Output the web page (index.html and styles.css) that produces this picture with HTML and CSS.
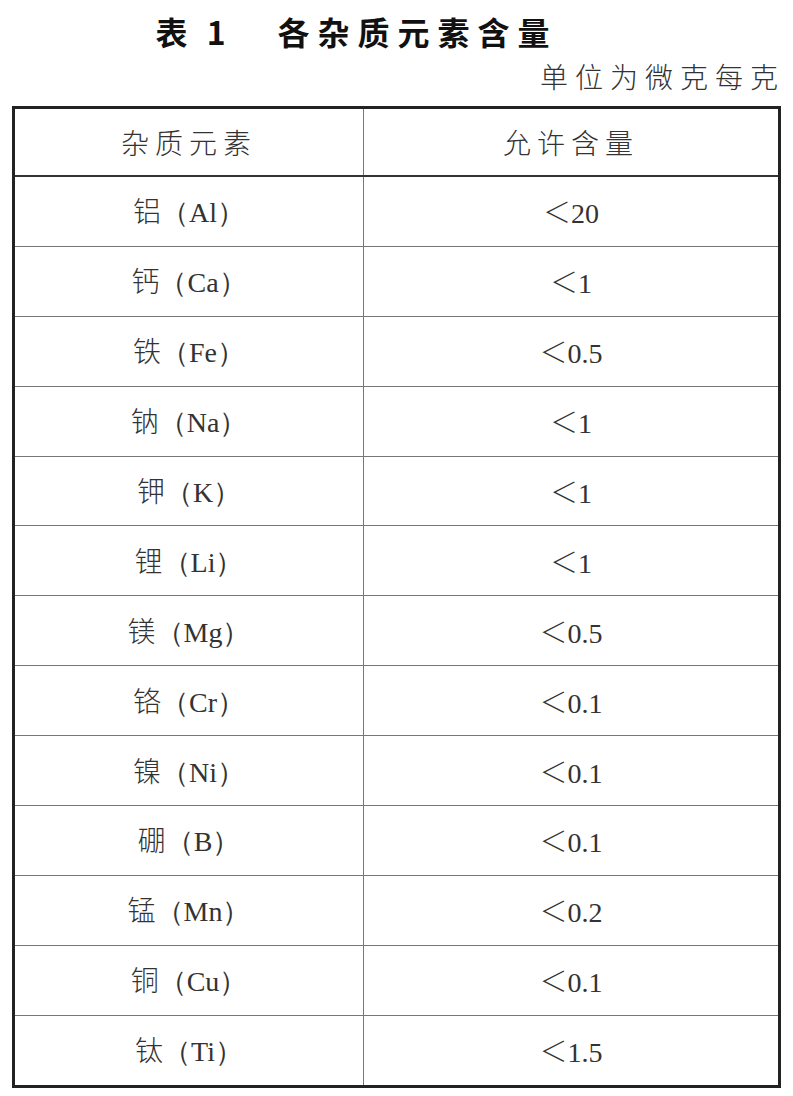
FILE: index.html
```html
<!DOCTYPE html>
<html lang="zh">
<head>
<meta charset="utf-8">
<link rel="stylesheet" href="styles.css">
</head>
<body>
<div class="page">
  <h1 class="title"><span class="tno">表 1</span><span class="tname">各杂质元素含量</span></h1>
  <div class="unit">单位为微克每克</div>
  <table class="tbl">
    <thead>
      <tr><th>杂质元素</th><th>允许含量</th></tr>
    </thead>
    <tbody>
      <tr><td>铝<span class="lat">（Al）</span></td><td><span class="lt">＜</span><span class="num">20</span></td></tr>
      <tr><td>钙<span class="lat">（Ca）</span></td><td><span class="lt">＜</span><span class="num">1</span></td></tr>
      <tr><td>铁<span class="lat">（Fe）</span></td><td><span class="lt">＜</span><span class="num">0.5</span></td></tr>
      <tr><td>钠<span class="lat">（Na）</span></td><td><span class="lt">＜</span><span class="num">1</span></td></tr>
      <tr><td>钾<span class="lat">（K）</span></td><td><span class="lt">＜</span><span class="num">1</span></td></tr>
      <tr><td>锂<span class="lat">（Li）</span></td><td><span class="lt">＜</span><span class="num">1</span></td></tr>
      <tr><td>镁<span class="lat">（Mg）</span></td><td><span class="lt">＜</span><span class="num">0.5</span></td></tr>
      <tr><td>铬<span class="lat">（Cr）</span></td><td><span class="lt">＜</span><span class="num">0.1</span></td></tr>
      <tr><td>镍<span class="lat">（Ni）</span></td><td><span class="lt">＜</span><span class="num">0.1</span></td></tr>
      <tr><td>硼<span class="lat">（B）</span></td><td><span class="lt">＜</span><span class="num">0.1</span></td></tr>
      <tr><td>锰<span class="lat">（Mn）</span></td><td><span class="lt">＜</span><span class="num">0.2</span></td></tr>
      <tr><td>铜<span class="lat">（Cu）</span></td><td><span class="lt">＜</span><span class="num">0.1</span></td></tr>
      <tr><td>钛<span class="lat">（Ti）</span></td><td><span class="lt">＜</span><span class="num">1.5</span></td></tr>
    </tbody>
  </table>
</div>
</body>
</html>
```

FILE: styles.css
```css
html, body {
  margin: 0;
  padding: 0;
  background: #ffffff;
}
.page {
  width: 793px;
  padding-top: 6px;
  font-family: "Noto Sans CJK SC", "Liberation Serif", serif;
  color: #222;
}
.title {
  margin: 0;
  height: 50px;
  display: flex;
  justify-content: center;
  align-items: center;
  padding-right: 80px;
  font-size: 32px;
  font-weight: 700;
  color: #111;
  line-height: 50px;
}
.tno {
  margin-right: 46px;
  letter-spacing: 6px;
}
.tname {
  letter-spacing: 8px;
}
.unit {
  text-align: right;
  padding-right: 15px;
  font-size: 28px;
  font-weight: 300;
  line-height: 40px;
  height: 40px;
  letter-spacing: 7px;
  margin-right: -7px;
  color: #333;
}
.tbl {
  margin: 10px 0 0 12px;
  width: 769px;
  border-collapse: collapse;
  border: 3px solid #222;
  table-layout: fixed;
}
.tbl th, .tbl td {
  height: 69px;
  padding: 0;
  text-align: center;
  vertical-align: middle;
  border: 1px solid #777;
  font-size: 28px;
  font-weight: 300;
  color: #333;
}
.tbl th {
  height: 66px;
  letter-spacing: 6px;
  border-bottom: 2px solid #333;
}
.tbl td {
  height: 68.9px;
}
.tbl th:first-child, .tbl td:first-child {
  width: 348px;
}
.lat, .num {
  font-family: "Liberation Serif", serif;
  font-size: 28px;
}
.lt {
  font-family: "Noto Sans CJK SC", sans-serif;
  font-weight: 200;
  font-size: 28px;
}
```
